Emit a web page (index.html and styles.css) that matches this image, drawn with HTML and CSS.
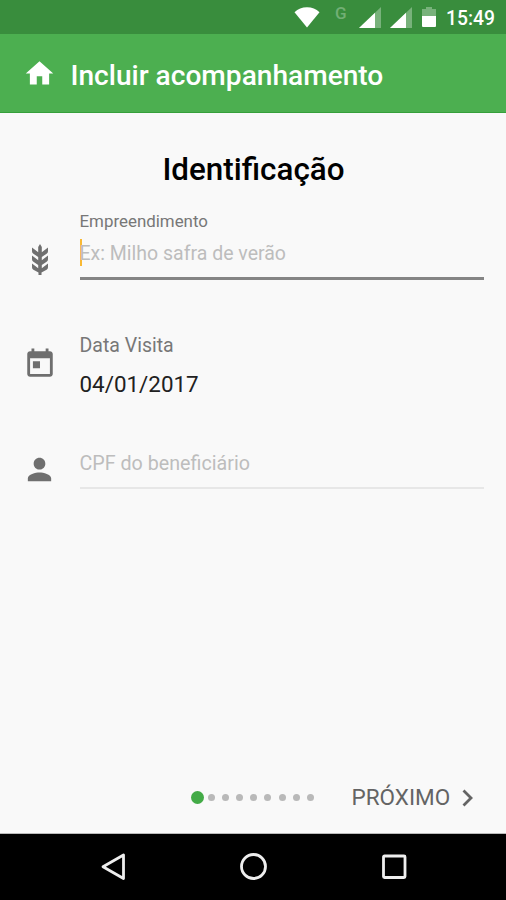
FILE: index.html
```html
<!DOCTYPE html>
<html lang="pt-BR">
<head>
    <meta charset="UTF-8">
    <meta name="viewport" content="width=device-width, initial-scale=1.0">
    <title>Incluir acompanhamento</title>
    <link rel="stylesheet" href="styles.css">
</head>
<body>
    <div class="screen">
        <div class="status-bar">
            <svg class="wifi" width="26" height="21" viewBox="0 0 26 21">
                <path d="M.5 5.200C4 2 8 .3 13 .3s9 1.700 12.500 4.900L13 20.500z" fill="#fff"/>
            </svg>
            <span class="network">G</span>
            <svg class="signal" width="22" height="21" viewBox="0 0 22 21">
                <path d="M0 21L22 0v21z" fill="#78b27b"/>
                <path d="M0 21L16 5.700V21z" fill="#fff"/>
            </svg>
            <svg class="signal" width="22" height="21" viewBox="0 0 22 21">
                <path d="M0 21L22 0v21z" fill="#78b27b"/>
                <path d="M0 21L16 5.700V21z" fill="#fff"/>
            </svg>
            <svg class="battery" width="14" height="20" viewBox="0 0 14 20">
                <path d="M4 0h6v2h4v7H0V2h4z" fill="#78b27b"/>
                <path d="M0 9h14v10a1 1 0 0 1-1 1H1a1 1 0 0 1-1-1z" fill="#fff"/>
            </svg>
            <span class="clock">15:49</span>
        </div>

        <header class="toolbar">
            <svg width="33" height="33" viewBox="0 0 24 24">
                <path d="M10 20v-6h4v6h5v-8h3L12 3 2 12h3v8z" fill="#fff"/>
            </svg>
            <h1>Incluir acompanhamento</h1>
        </header>

        <main class="content">
            <h2>Identificação</h2>

            <div class="field field-empreendimento">
                <svg class="wheat" width="18" height="31" viewBox="0 0 18 31">
                    <path d="M9 0l1.800 3v5.200L17 3.500v3.700q0 1.600-1.400 2.500L10.800 13v3.200l6.200-4.700v3.700q0 1.600-1.400 2.500L10.800 21v3.200l6.200-4.700v3.700q0 1.600-1.400 2.500L10.500 28.500V31h-3v-2.500L2.400 25.700Q1 24.800 1 23.200v-3.700l6.200 4.700V21l-4.800-3.300Q1 16.800 1 15.200v-3.700l6.200 4.700V13L2.400 9.700Q1 8.800 1 7.200V3.500l6.200 4.700V3z" fill="#6f6f6f"/>
                </svg>
                <div class="input focused">
                    <label>Empreendimento</label>
                    <div class="line"><span class="cursor"></span><span class="placeholder">Ex: Milho safra de verão</span></div>
                </div>
            </div>

            <div class="field field-data">
                <svg width="34" height="34" viewBox="0 0 24 24">
                    <path d="M19 3h-1V1h-2v2H8V1H6v2H5c-1.110 0-1.990.9-1.990 2L3 19c0 1.100.89 2 2 2h14c1.100 0 2-.9 2-2V5c0-1.100-.9-2-2-2zm0 16H5V8h14v11zM7 10h5v5H7z" fill="#6f6f6f"/>
                </svg>
                <div class="input">
                    <label>Data Visita</label>
                    <span class="value">04/01/2017</span>
                </div>
            </div>

            <div class="field field-cpf">
                <svg width="35" height="35" viewBox="0 0 24 24">
                    <path d="M12 12c2.210 0 4-1.790 4-4s-1.790-4-4-4-4 1.790-4 4 1.790 4 4 4zm0 2c-2.670 0-8 1.340-8 4v2h16v-2c0-2.660-5.330-4-8-4z" fill="#6f6f6f"/>
                </svg>
                <div class="input underlined">
                    <span class="placeholder">CPF do beneficiário</span>
                </div>
            </div>
        </main>

        <footer class="stepper">
            <div class="dots">
                <i class="active"></i><i></i><i></i><i></i><i></i><i></i><i></i><i></i><i></i>
            </div>
            <span class="next">PRÓXIMO</span>
            <svg width="11" height="18" viewBox="0 0 11 18">
                <path d="M1.500 1.500L9 9l-7.500 7.500" fill="none" stroke="#646464" stroke-width="2.800"/>
            </svg>
        </footer>

        <nav class="nav-bar">
            <svg width="28" height="28" viewBox="0 0 28 28">
                <path d="M23.500 2v23.500L3 13.700z" fill="none" stroke="#eee" stroke-width="2.800" stroke-linejoin="round"/>
            </svg>
            <svg width="28" height="28" viewBox="0 0 28 28">
                <circle cx="13.500" cy="13.500" r="12" fill="none" stroke="#eee" stroke-width="2.800"/>
            </svg>
            <svg width="28" height="28" viewBox="0 0 28 28">
                <rect x="3.500" y="3" width="21.500" height="21.500" rx="1" fill="none" stroke="#eee" stroke-width="2.800"/>
            </svg>
        </nav>
    </div>
</body>
</html>
```
FILE: styles.css
```css
* {
    margin: 0;
    padding: 0;
    box-sizing: border-box;
}

body {
    font-family: Roboto, "Liberation Sans", sans-serif;
    background: #f9f9f9;
}

svg {
    display: block;
    flex-shrink: 0;
}

.screen {
    display: flex;
    flex-direction: column;
    width: 506px;
    height: 900px;
    overflow: hidden;
}

/* status bar */
.status-bar {
    display: flex;
    align-items: flex-start;
    height: 34px;
    padding: 7px 0 0 294px;
    background: #398d3d;
    color: #fff;
}

.network {
    width: 14px;
    margin: -4px 10px 0 15px;
    font-size: 17px;
    line-height: 20px;
    font-weight: 500;
    color: #72af75;
}

.signal {
    margin-right: 9px;
}

.battery {
    margin-left: 1px;
}

.clock {
    margin-left: 10px;
    font-size: 19.3px;
    line-height: 24px;
    font-weight: 500;
}

/* toolbar */
.toolbar {
    display: flex;
    align-items: center;
    height: 79px;
    padding-left: 23px;
    background: #4caf50;
    border-bottom: 1px solid #36a03b;
    color: #fff;
}

.toolbar svg {
    margin-top: 1px;
}

.toolbar h1 {
    margin: 5px 0 0 14.5px;
    font-size: 28.1px;
    line-height: 32px;
    font-weight: 500;
}

/* form */
.content {
    flex: 1;
    padding: 39px 22px 0 23px;
}

.content h2 {
    font-size: 31.4px;
    line-height: 36px;
    font-weight: 500;
    text-align: center;
    color: #000;
}

.field {
    display: flex;
}

.field svg {
    margin-right: 23px;
}

.input {
    flex: 1;
    display: flex;
    flex-direction: column;
}

label {
    color: #777;
}

.placeholder {
    font-size: 19.7px;
    line-height: 24px;
    color: #bdbdbd;
}

.field-empreendimento {
    height: 69px;
    margin-top: 23px;
}

.field-empreendimento .wheat {
    margin: 33px 30.5px 0 8px;
}

.field-empreendimento label {
    font-size: 16.9px;
    line-height: 21px;
}

.focused {
    border-bottom: 3px solid #858585;
}

.focused .placeholder {
    margin-top: 3px;
    font-size: 19.5px;
}

.line {
    display: flex;
    margin-top: 7px;
}

.cursor {
    width: 2px;
    height: 27px;
    margin: 0 -2px 0 0;
    background: #f9b934;
}

.field-data {
    margin-top: 54px;
}

.field-data svg {
    margin: 13px 22.5px 0 0;
}

.field-data label {
    font-size: 19.5px;
    line-height: 24px;
}

.value {
    margin-top: 12px;
    font-size: 22.4px;
    line-height: 28px;
    color: #212121;
}

.field-cpf {
    margin-top: 54px;
}

.field-cpf svg {
    margin: 0 22.5px 0 -1px;
}

.underlined {
    height: 37px;
    border-bottom: 2px solid #e7e7e7;
}

/* step navigation */
.stepper {
    display: flex;
    align-items: center;
    height: 72px;
    padding-left: 191px;
    border-bottom: 1px solid #bbb;
}

.dots {
    display: flex;
    align-items: center;
    gap: 7.1px;
    width: 124px;
}

.dots i {
    width: 7px;
    height: 7px;
    border-radius: 50%;
    background: #b9b9b9;
}

.dots .active {
    width: 13px;
    height: 13px;
    margin-right: -3px;
    background: #43ab47;
}

.next {
    width: 98px;
    margin: -2px 12.5px 0 36.5px;
    font-size: 22.5px;
    line-height: 28px;
    color: #646464;
}

/* android navigation */
.nav-bar {
    display: flex;
    align-items: center;
    justify-content: space-between;
    height: 66px;
    padding: 0 98px 0 100px;
    background: #000;
}
```
